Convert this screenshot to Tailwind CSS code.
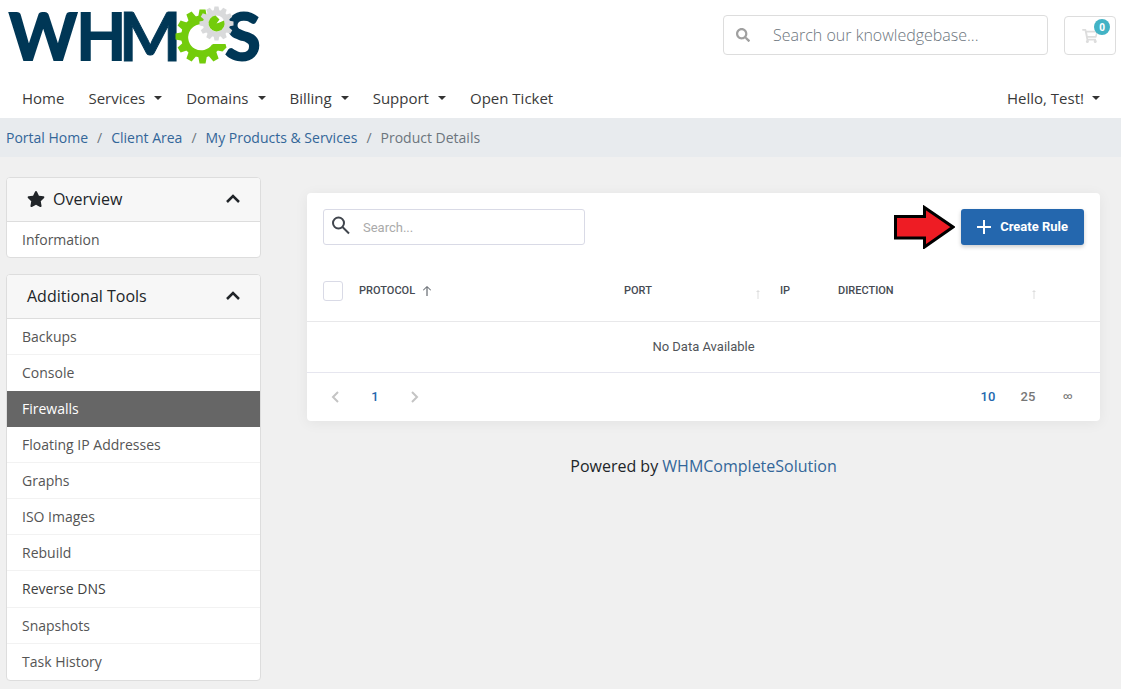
<!DOCTYPE html>
<html lang="en">
<head>
<meta charset="utf-8">
<meta name="viewport" content="width=device-width, initial-scale=1">
<title>Firewalls - Product Details</title>
<script src="https://cdn.jsdelivr.net/npm/@tailwindcss/browser@4"></script>
</head>
<body class="min-h-screen bg-[#f0f0f0] font-['Open_Sans',sans-serif] text-[#212529]">
<header class="bg-white">
  <div class="flex h-[78px] items-start pl-2 pr-[5px]">
    <a href="#" aria-label="WHMCS" class="block">
      <svg class="overflow-visible" width="256" height="70" viewBox="8 0 256 70">
        <g fill="#003756" font-family="Lato, sans-serif" font-weight="700">
          <text x="9" y="60" font-size="65" stroke="#003756" stroke-width="2">W</text>
          <text x="76" y="61" font-size="70" font-family="Liberation Sans, sans-serif">H</text>
          <text x="119" y="61" font-size="66" stroke="#003756" stroke-width="1">M</text>
          <text x="225" y="60" font-size="65" stroke="#003756" stroke-width="2">S</text>
        </g>
        <defs>
          <path id="gt" d="M-4.500-19L-3-27H3L4.500-19Z"/>
          <path id="st" d="M-3-12L-2-17H2L3-12Z"/>
        </defs>
        <g fill="#73cc0b" transform="translate(202.500 36.500)">
          <path fill-rule="evenodd" d="M0-21A21 21 0 1 0 19 8H9.500A13 13 0 1 1 3-11.500L12-17A21 21 0 0 0 0-21Z"/>
          <use href="#gt"/><use href="#gt" transform="rotate(-30)"/><use href="#gt" transform="rotate(-60)"/><use href="#gt" transform="rotate(-90)"/><use href="#gt" transform="rotate(-120)"/><use href="#gt" transform="rotate(-150)"/><use href="#gt" transform="rotate(180)"/><use href="#gt" transform="rotate(150)"/>
          <path d="M10 7.500H23L24 11L20 15L15 14Z"/>
        </g>
        <g fill="#d9dadb" transform="translate(216.500 23.500)">
          <circle r="13.500"/>
          <use href="#st"/><use href="#st" transform="rotate(30)"/><use href="#st" transform="rotate(60)"/><use href="#st" transform="rotate(90)"/><use href="#st" transform="rotate(120)"/><use href="#st" transform="rotate(150)"/><use href="#st" transform="rotate(180)"/><use href="#st" transform="rotate(210)"/><use href="#st" transform="rotate(240)"/><use href="#st" transform="rotate(270)"/><use href="#st" transform="rotate(300)"/><use href="#st" transform="rotate(330)"/>
          <circle r="8" fill="#fff"/>
          <path fill="#73cc0b" d="M-1-8A8 8 0 1 0 7.500-3L3-1L0 0L3-4Z"/>
        </g>
      </svg>
    </a>
    <form class="ml-auto mt-[15px] flex h-10 w-[325px] items-center rounded border border-[#dddddd]">
      <button type="button" aria-label="Search" class="flex w-[37px] justify-center text-[#a0a0a0]">
        <svg width="14" height="14" viewBox="0 0 512 512" fill="currentColor"><path d="M505 442.700L405.300 343c-4.500-4.500-10.600-7-17-7H372c27.600-35.300 44-79.700 44-128C416 93.100 322.900 0 208 0S0 93.100 0 208s93.100 208 208 208c48.300 0 92.700-16.400 128-44v16.300c0 6.400 2.500 12.500 7 17l99.700 99.700c9.400 9.400 24.600 9.400 33.900 0l28.300-28.300c9.400-9.400 9.400-24.600.1-34zM208 336c-70.700 0-128-57.200-128-128 0-70.700 57.200-128 128-128 70.700 0 128 57.200 128 128 0 70.700-57.200 128-128 128z"/></svg>
      </button>
      <input type="text" aria-label="Search our knowledgebase" placeholder="Search our knowledgebase..." class="h-full min-w-0 flex-1 bg-transparent px-3 text-base font-light outline-none placeholder:text-[#6c757d]">
    </form>
    <button type="button" aria-label="Shopping cart" class="relative ml-4 mt-4 flex h-[39px] w-13 items-center justify-center rounded border border-[#dddddd] text-[#dddddd]">
      <svg width="16" height="14" viewBox="0 0 576 512" fill="currentColor"><path d="M528.120 301.319l47.273-208C578.806 78.301 567.391 64 551.990 64H159.208l-9.166-44.810C147.758 8.021 137.930 0 126.529 0H24C10.745 0 0 10.745 0 24v16c0 13.255 10.745 24 24 24h69.883l70.248 343.435C147.325 417.100 136 435.222 136 456c0 30.928 25.072 56 56 56s56-25.072 56-56c0-15.674-6.447-29.835-16.824-40h209.647C430.447 426.165 424 440.326 424 456c0 30.928 25.072 56 56 56s56-25.072 56-56c0-22.172-12.888-41.332-31.579-50.405l5.517-24.276c3.413-15.018-8.002-29.319-23.403-29.319H218.117l-6.545-32h293.145c11.206 0 20.920-7.754 23.403-18.681zM180 128H512L480 256H205Z" fill-rule="evenodd"/></svg>
      <span class="absolute right-[5px] top-[2px] flex size-4 items-center justify-center rounded-full bg-[#42b3c5] text-[10px] font-bold text-white">0</span>
    </button>
  </div>
  <nav class="flex h-10 items-center gap-6 pl-[22px] pr-[21px] text-[15px] text-[#3a3a3a]">
    <a href="#">Home</a>
    <a href="#" class="flex items-center gap-[9px]">Services<span class="border-x-4 border-t-4 border-x-transparent border-t-[#333]"></span></a>
    <a href="#" class="flex items-center gap-[9px]">Domains<span class="border-x-4 border-t-4 border-x-transparent border-t-[#333]"></span></a>
    <a href="#" class="flex items-center gap-[9px]">Billing<span class="border-x-4 border-t-4 border-x-transparent border-t-[#333]"></span></a>
    <a href="#" class="flex items-center gap-[9px]">Support<span class="border-x-4 border-t-4 border-x-transparent border-t-[#333]"></span></a>
    <a href="#">Open Ticket</a>
    <a href="#" class="ml-auto flex items-center gap-2">Hello, Test!<span class="border-x-4 border-t-4 border-x-transparent border-t-[#333]"></span></a>
  </nav>
</header>
<nav aria-label="Breadcrumb" class="flex h-[39px] items-center gap-[9px] bg-[#e8ebee] px-[6px] text-sm text-[#6c757d]">
  <a href="#" class="text-[#336699]">Portal Home</a><span>/</span>
  <a href="#" class="text-[#336699]">Client Area</a><span>/</span>
  <a href="#" class="text-[#336699]">My Products &amp; Services</a><span>/</span>
  <span>Product Details</span>
</nav>
<div class="flex items-start pl-[6px] pr-[21px] pt-5">
  <aside class="flex w-[255px] shrink-0 flex-col gap-4 pb-2">
    <section class="overflow-hidden rounded border border-[#dddddd] bg-white">
      <h3><button type="button" class="flex h-[44px] w-full items-center border-b border-[#dddddd] bg-[#f7f7f7] px-5 pb-0.5 text-base">
        <svg class="mr-2" width="18" height="16" viewBox="0 0 576 512" fill="currentColor"><path d="M259.300 17.800L194 150.200 47.900 171.500c-26.200 3.800-36.700 36.100-17.700 54.600l105.700 103-25 145.500c-4.500 26.300 23.200 46 46.400 33.700L288 439.600l130.700 68.700c23.200 12.200 50.900-7.400 46.400-33.700l-25-145.500 105.700-103c19-18.500 8.500-50.800-17.700-54.600L382 150.200 316.700 17.800c-11.700-23.600-45.600-23.900-57.400 0z"/></svg>
        Overview
        <svg class="ml-auto" width="14" height="9" viewBox="0 0 14 9" fill="none" stroke="currentColor" stroke-width="2.500"><path d="M1 8L7 2L13 8"/></svg>
      </button></h3>
      <a href="#" class="flex h-[35px] items-center px-[15px] text-sm text-[#555]">Information</a>
    </section>
    <section class="overflow-hidden rounded border border-[#dddddd] bg-white text-sm text-[#555]">
      <h3><button type="button" class="flex h-[44px] w-full items-center border-b border-[#dddddd] bg-[#f7f7f7] px-5 pb-0.5 text-base text-[#212529]">
        Additional Tools
        <svg class="ml-auto" width="14" height="9" viewBox="0 0 14 9" fill="none" stroke="currentColor" stroke-width="2.500"><path d="M1 8L7 2L13 8"/></svg>
      </button></h3>
      <a href="#" class="flex h-9 items-center border-b border-[#f2f2f2] px-[15px]">Backups</a>
      <a href="#" class="flex h-9 items-center px-[15px]">Console</a>
      <a href="#" class="flex h-9 items-center bg-[#666] px-[15px] text-white">Firewalls</a>
      <a href="#" class="flex h-9 items-center border-b border-[#f2f2f2] px-[15px]">Floating IP Addresses</a>
      <a href="#" class="flex h-9 items-center border-b border-[#f2f2f2] px-[15px]">Graphs</a>
      <a href="#" class="flex h-9 items-center border-b border-[#f2f2f2] px-[15px]">ISO Images</a>
      <a href="#" class="flex h-9 items-center border-b border-[#f2f2f2] px-[15px]">Rebuild</a>
      <a href="#" class="flex h-[37px] items-center border-b border-[#f2f2f2] px-[15px] text-[#3f3f3f]">Reverse DNS</a>
      <a href="#" class="flex h-9 items-center border-b border-[#f2f2f2] px-[15px]">Snapshots</a>
      <a href="#" class="flex h-9 items-center px-[15px]">Task History</a>
    </section>
  </aside>
  <main class="ml-[46px] min-w-0 flex-1 pt-4">
    <section class="rounded bg-white font-[Roboto,sans-serif] text-[#505459] shadow-[0_2px_14px_rgba(0,0,0,0.06)]">
      <div class="flex items-center justify-between p-4">
        <label class="flex h-9 w-[262px] items-center rounded-[3px] border border-[#d9dae6] pl-2">
          <svg class="mb-1" width="19" height="19" viewBox="0 0 19 19" fill="none" stroke="#40454d" stroke-width="2"><circle cx="6.500" cy="7" r="5.500"/><path d="M10.500 11L17 17.500"/></svg>
          <input type="text" aria-label="Search rules" placeholder="Search..." class="h-full min-w-0 flex-1 bg-transparent px-3 text-[13px] outline-none placeholder:text-[#aaaaaa]">
        </label>
        <div class="relative">
          <svg class="absolute right-full top-[-4px] mr-[6px]" width="62" height="44" viewBox="0 0 62 44"><path d="M2.500 11.500H31.500V2.500L60 22L31.500 42V33H2.500Z" fill="#ee1c24" stroke="#000" stroke-width="3"/></svg>
          <button type="button" class="flex h-9 items-center gap-2 rounded-[3px] bg-[#2467ae] px-4 text-[13px] font-bold text-white shadow-[0_2px_4px_rgba(0,0,0,0.2)]">
            <svg width="15" height="14" viewBox="0 0 15 14" stroke="#fff" stroke-width="2" fill="none"><path d="M0 7H14M7 0V14"/></svg>
            Create Rule
          </button>
        </div>
      </div>
      <table class="w-full table-fixed text-left">
        <colgroup><col class="w-[52px]"><col><col class="w-[156px]"><col class="w-[58px]"><col class="w-[262px]"></colgroup>
        <thead>
          <tr class="h-[60px] border-b border-[#e8e8ea] text-[11px] font-medium text-[#454a52]">
            <th class="pl-4"><input type="checkbox" aria-label="Select all" class="block size-5 appearance-none rounded-[3px] border border-[#d9dae6]"></th>
            <th class="font-medium"><button type="button" class="flex items-center gap-2">PROTOCOL <svg width="8" height="10" viewBox="0 0 8 10" fill="none" stroke="currentColor"><path d="M4 10V1M0 4.500L4 .5L8 4.500"/></svg></button></th>
            <th class="font-medium"><button type="button" class="flex w-full items-center justify-between pr-5">PORT <svg class="mt-2" width="4" height="9" viewBox="0 0 4 9" fill="none" stroke="#dddddd"><path d="M2 9V0M.5 1.500H3.500"/></svg></button></th>
            <th class="font-medium">IP</th>
            <th class="font-medium"><button type="button" class="flex w-full items-center justify-between pr-16">DIRECTION <svg class="mt-2" width="4" height="9" viewBox="0 0 4 9" fill="none" stroke="#dddddd"><path d="M2 9V0M.5 1.500H3.500"/></svg></button></th>
          </tr>
        </thead>
        <tbody><tr class="h-[51px] border-b border-[#e6e6ef]"><td colspan="5" class="text-center text-[13px]">No Data Available</td></tr></tbody>
      </table>
      <div class="flex h-12 items-center justify-between px-2 text-[13px] font-medium">
        <div class="flex text-[#c4c4c4]">
          <button type="button" aria-label="Previous page" class="flex w-10 items-center justify-center"><svg width="8" height="12" viewBox="0 0 8 12" fill="none" stroke="currentColor" stroke-width="2"><path d="M7 1L2 6L7 11"/></svg></button>
          <button type="button" class="w-10 text-[#2467ae]">1</button>
          <button type="button" aria-label="Next page" class="flex w-10 items-center justify-center"><svg width="8" height="12" viewBox="0 0 8 12" fill="none" stroke="currentColor" stroke-width="2"><path d="M1 1L6 6L1 11"/></svg></button>
        </div>
        <div class="flex pr-1 text-[#777]">
          <button type="button" class="w-10 text-[#2467ae]">10</button>
          <button type="button" class="w-10">25</button>
          <button type="button" class="w-10 text-[9px]">∞</button>
        </div>
      </div>
    </section>
    <p class="mt-[33px] text-center text-base">Powered by <a href="#" class="text-[#336699]">WHMCompleteSolution</a></p>
  </main>
</div>
</body>
</html>
